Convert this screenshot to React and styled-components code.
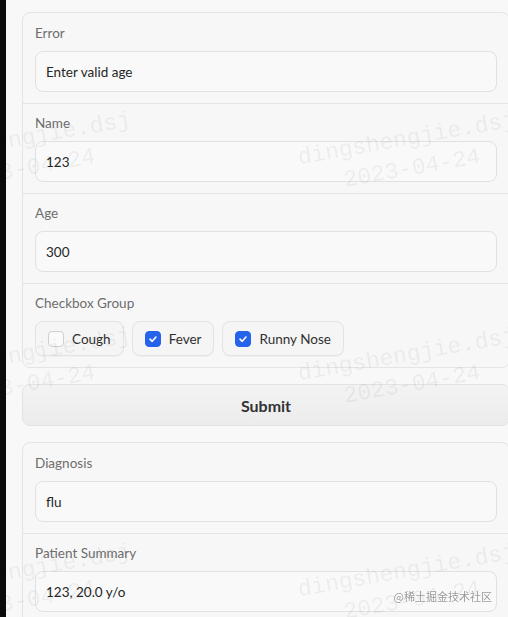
import styled, { createGlobalStyle } from "styled-components";

const GlobalStyle = createGlobalStyle`
  html, body {
    margin: 0;
    padding: 0;
    background: #f8f8f8;
    overflow: hidden;
  }
  body {
    font-family: Lato, "Liberation Sans", sans-serif;
  }
`

const Page = styled.div`
  display: flex;
  align-items: flex-start;
  height: 617px;
  overflow: hidden;
`

const Strip = styled.div`
  width: 6px;
  height: 100%;
  flex-shrink: 0;
  background: #0b0b0b;
`

const Main = styled.div`
  padding: 12px 0 0 16px;
  display: flex;
  flex-direction: column;
  gap: 16px;
  width: 488px;
  flex-shrink: 0;

  & > * {
    flex-shrink: 0;
  }
`

const Panel = styled.div`
  border: 1px solid #e4e4e4;
  border-radius: 8px;
  background: #f7f7f7;
  padding-top: 1px;
  display: flex;
  flex-direction: column;
`

const Block = styled.div`
  padding: 9px 12px 11px;
  border-top: ${(p) => (p.$first ? "none" : "1px solid #e4e4e4")};
  display: flex;
  flex-direction: column;
  gap: 8px;
`

const Label = styled.div`
  font-size: 13.5px;
  line-height: 20px;
  color: #6d6d6d;
`

const Field = styled.div`
  height: 41px;
  box-sizing: border-box;
  border: 1px solid #e1e1e1;
  border-radius: 8px;
  background: #f9f9f9;
  padding: 0 10px;
  display: flex;
  align-items: center;
  font-size: 13.5px;
  color: #262626;
`

const Options = styled.div`
  display: flex;
  gap: 8px;
`

const Option = styled.div`
  height: 35px;
  box-sizing: border-box;
  border: 1px solid #e3e3e3;
  border-radius: 8px;
  background: #f5f5f5;
  box-shadow: 0 1px 1px rgba(0, 0, 0, 0.03);
  padding: 0 12px;
  display: flex;
  align-items: center;
  gap: 8px;
  font-size: 13.5px;
  color: #303030;
`

const Box = styled.span`
  width: 16px;
  height: 16px;
  box-sizing: border-box;
  border-radius: 4px;
  border: 1px solid ${(p) => (p.$on ? "#2563eb" : "#cfcfcf")};
  background: ${(p) => (p.$on ? "#2563eb" : "#fafafa")};
  display: flex;
  align-items: center;
  justify-content: center;
`

const SubmitButton = styled.button`
  height: 42px;
  border: 1px solid #e2e2e2;
  border-radius: 8px;
  background: linear-gradient(#f3f3f3, #ececec);
  font-family: Lato, "Liberation Sans", sans-serif;
  font-size: 16px;
  font-weight: 700;
  color: #333;
`

// faint tiled watermark drawn over the form
const Watermarks = styled.div`
  position: fixed;
  left: -168px;
  top: -170px;
  display: grid;
  grid-template-columns: repeat(3, 385px);
  grid-auto-rows: 216px;
  pointer-events: none;
`

const Mark = styled.div`
  display: flex;
  flex-direction: column;
  align-items: center;
  justify-content: center;
  transform: rotate(-10deg);
  font-family: "Liberation Mono", monospace;
  font-size: 23px;
  line-height: 30px;
  color: rgba(0, 0, 0, 0.05);
`

const Credit = styled.div`
  position: fixed;
  right: 16px;
  bottom: 13px;
  font-family: "Noto Sans CJK SC", sans-serif;
  font-size: 11px;
  color: #9b9b9b;
  text-shadow: 0 0 2px #fff;
`

const Check = () => (
  <svg width="10" height="10" viewBox="0 0 10 10">
    <path d="M2 5.2 L4.2 7.3 L8 3" fill="none" stroke="#fff" strokeWidth="1.6" strokeLinecap="round" strokeLinejoin="round" />
  </svg>
)

const Input = ({ label, value, first }) => (
  <Block $first={first}>
    <Label>{label}</Label>
    <Field>{value}</Field>
  </Block>
)

const symptoms = [
  { name: "Cough", on: false },
  { name: "Fever", on: true },
  { name: "Runny Nose", on: true },
]

export default function App() {
  return (
    <>
      <GlobalStyle />
      <Page>
        <Strip />
        <Main>
          <Panel>
            <Input first label="Error" value="Enter valid age" />
            <Input label="Name" value="123" />
            <Input label="Age" value="300" />
            <Block>
              <Label>Checkbox Group</Label>
              <Options>
                {symptoms.map((s) => (
                  <Option key={s.name}>
                    <Box $on={s.on}>{s.on && <Check />}</Box>
                    {s.name}
                  </Option>
                ))}
              </Options>
            </Block>
          </Panel>
          <SubmitButton>Submit</SubmitButton>
          <Panel>
            <Input first label="Diagnosis" value="flu" />
            <Input label="Patient Summary" value="123, 20.0 y/o" />
          </Panel>
        </Main>
      </Page>
      <Watermarks>
        {Array.from({ length: 12 }).map((_, i) => (
          <Mark key={i}>
            <span>dingshengjie.dsj</span>
            <span>2023-04-24</span>
          </Mark>
        ))}
      </Watermarks>
      <Credit>@稀土掘金技术社区</Credit>
    </>
  )
}
